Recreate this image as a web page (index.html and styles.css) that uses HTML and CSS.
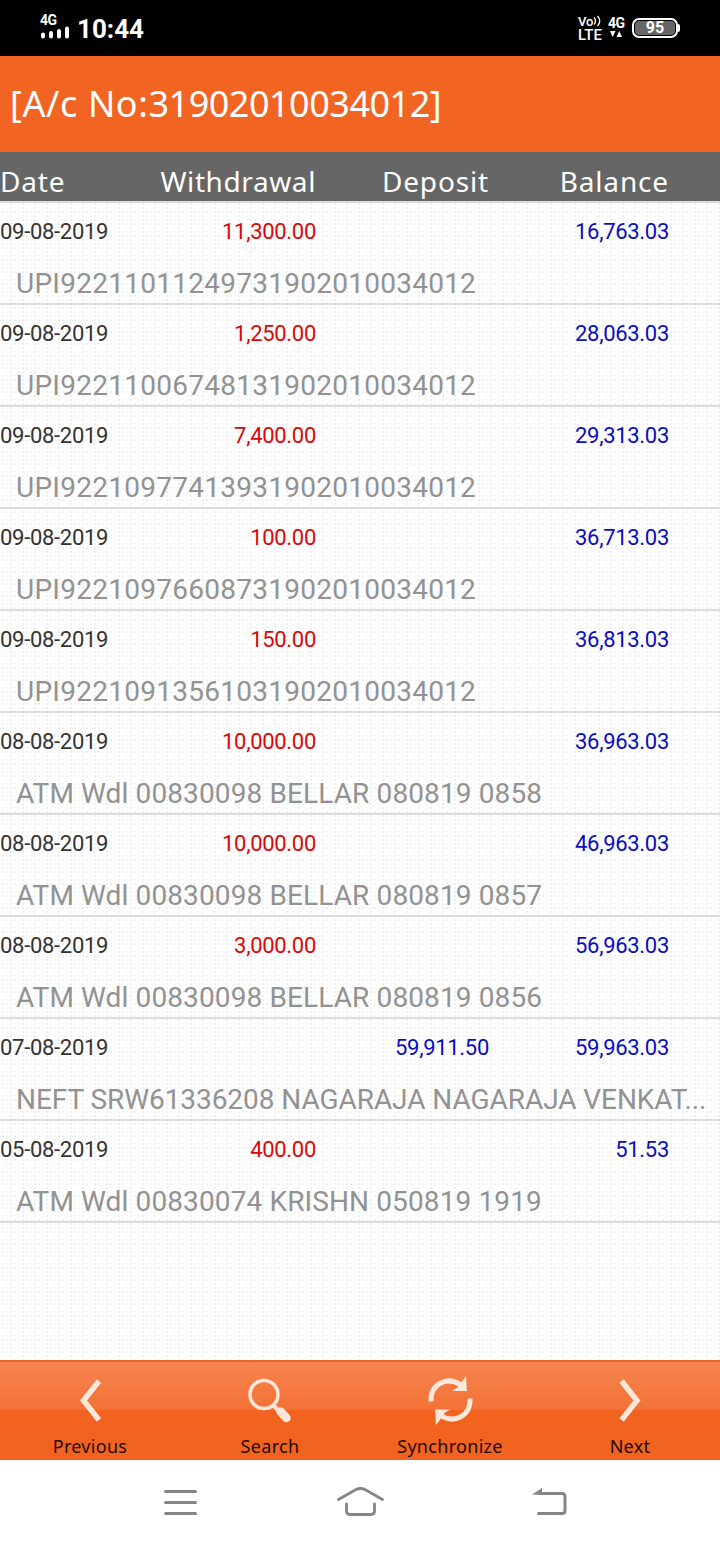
FILE: index.html
```html
<!DOCTYPE html>
<html lang="en">
<head>
  <meta charset="UTF-8">
  <meta name="viewport" content="width=device-width, initial-scale=1.0">
  <title>Account Statement</title>
  <link rel="stylesheet" href="styles.css">
</head>
<body>
  <div class="status">
    <div class="signal">
      <span class="net">4G</span>
      <svg width="30" height="13" viewBox="0 0 30 13" stroke="#fff" stroke-width="4" stroke-linecap="round"><path d="M3 8.500v2M11 7v3.500M19 5v5.500M27 2.500v8"/></svg>
    </div>
    <span class="clock">10:44</span>
    <div class="volte">
      <span class="vo">Vo<svg width="9" height="12" viewBox="0 0 9 12" fill="none" stroke="#fff" stroke-width="1.300"><path d="M1 2.500q3 3.500 0 7M4.500 1q4.500 5 0 10"/></svg></span>
      <span class="lte">LTE</span>
    </div>
    <div class="data">
      <span>4G</span>
      <svg width="12" height="6" viewBox="0 0 12 6" fill="#fff"><path d="M0 0h5.500L2.750 6zM6.500 6H12L9.250 0z"/></svg>
    </div>
    <div class="battery"><span>95</span></div>
    <i class="tip"></i>
  </div>

  <div class="title"><span class="label">[A/c No:</span><span class="number">31902010034012]</span></div>

  <div class="cols head">
    <span class="h-date">Date</span><span class="h-wdl">Withdrawal</span><span>Deposit</span><span>Balance</span>
  </div>

  <div class="list">
    <div class="row">
      <div class="cols"><span>09-08-2019</span><span class="red">11,300.00</span><span></span><span class="blue">16,763.03</span></div>
      <p class="upi">UPI92211011249731902010034012</p>
    </div>
    <div class="row">
      <div class="cols"><span>09-08-2019</span><span class="red">1,250.00</span><span></span><span class="blue">28,063.03</span></div>
      <p class="upi">UPI92211006748131902010034012</p>
    </div>
    <div class="row">
      <div class="cols"><span>09-08-2019</span><span class="red">7,400.00</span><span></span><span class="blue">29,313.03</span></div>
      <p class="upi">UPI92210977413931902010034012</p>
    </div>
    <div class="row">
      <div class="cols"><span>09-08-2019</span><span class="red">100.00</span><span></span><span class="blue">36,713.03</span></div>
      <p class="upi">UPI92210976608731902010034012</p>
    </div>
    <div class="row">
      <div class="cols"><span>09-08-2019</span><span class="red">150.00</span><span></span><span class="blue">36,813.03</span></div>
      <p class="upi">UPI92210913561031902010034012</p>
    </div>
    <div class="row">
      <div class="cols"><span>08-08-2019</span><span class="red">10,000.00</span><span></span><span class="blue">36,963.03</span></div>
      <p class="atm">ATM Wdl 00830098 BELLAR 080819 0858</p>
    </div>
    <div class="row">
      <div class="cols"><span>08-08-2019</span><span class="red">10,000.00</span><span></span><span class="blue">46,963.03</span></div>
      <p class="atm">ATM Wdl 00830098 BELLAR 080819 0857</p>
    </div>
    <div class="row">
      <div class="cols"><span>08-08-2019</span><span class="red">3,000.00</span><span></span><span class="blue">56,963.03</span></div>
      <p class="atm">ATM Wdl 00830098 BELLAR 080819 0856</p>
    </div>
    <div class="row">
      <div class="cols"><span>07-08-2019</span><span></span><span class="blue">59,911.50</span><span class="blue">59,963.03</span></div>
      <p class="neft">NEFT SRW61336208 NAGARAJA NAGARAJA VENKAT...</p>
    </div>
    <div class="row">
      <div class="cols"><span>05-08-2019</span><span class="red">400.00</span><span></span><span class="blue">51.53</span></div>
      <p class="atm">ATM Wdl 00830074 KRISHN 050819 1919</p>
    </div>
  </div>

  <div class="tabs">
    <div class="tab">
      <svg width="56" height="56" viewBox="0 0 56 56" fill="none" stroke="#fde6da" stroke-width="5.500"><path d="M37 9L21.500 28.500l15.500 19.500"/></svg>
      <span>Previous</span>
    </div>
    <div class="tab">
      <svg width="56" height="56" viewBox="0 0 56 56" fill="none" stroke="#fde6da"><circle cx="22" cy="22.500" r="14" stroke-width="3.500"/><path d="M31.500 33.500l5 5" stroke-width="4"/><path d="M38.500 39.500l6 6.500" stroke-width="8.500" stroke-linecap="round"/></svg>
      <span>Search</span>
    </div>
    <div class="tab">
      <svg width="56" height="56" viewBox="0 0 56 56"><path d="M9 29.500C8 12 25 4 38 12.500" fill="none" stroke="#fde6da" stroke-width="5"/><path d="M44 4l1 15H30l5.500-3.500 3.500-5z" fill="#fde6da"/><path d="M48 26.500C49 44 32 52 19 43.500" fill="none" stroke="#fde6da" stroke-width="5"/><path d="M14 53l-1-15.500h15l-5.500 3.500-3.500 5.500z" fill="#fde6da"/></svg>
      <span>Synchronize</span>
    </div>
    <div class="tab">
      <svg width="56" height="56" viewBox="0 0 56 56" fill="none" stroke="#fde6da" stroke-width="5.500"><path d="M19.500 9L35 28.500l-15.500 19.500"/></svg>
      <span>Next</span>
    </div>
  </div>

  <div class="nav">
    <svg width="36" height="36" viewBox="0 0 36 36" fill="none" stroke="#858585" stroke-width="3" stroke-linecap="round"><path d="M3.500 7.500h30M3.500 18.500h30M3.500 29.500h30"/></svg>
    <svg class="home" width="50" height="36" viewBox="0 0 50 36" fill="none" stroke="#858585" stroke-width="2.800" stroke-linecap="round"><path d="M3.500 15.500L21 5.500q4.500-2 9 0l17.500 10M11.500 20v7q0 3.500 3.500 3.500h21q3.500 0 3.500-3.500v-7"/></svg>
    <svg width="36" height="36" viewBox="0 0 36 36" fill="none" stroke="#858585" stroke-width="3" stroke-linecap="round"><path d="M8 9.500h23q3 0 3 3v14q0 3-3 3H7.500"/><path d="M1 10.500L11 4v7z" fill="#858585" stroke="none"/></svg>
  </div>
</body>
</html>
```
FILE: styles.css
```css
*{ box-sizing: border-box;}
body{ margin: 0; width: 720px; height: 1544px; overflow: hidden; display: flex; flex-direction: column; background: #fff; font-family: Roboto, "Liberation Sans", sans-serif;}
svg{ display: block; flex: none;}

/* status bar */
.status{ height: 56px; flex: none; padding-left: 40px; display: flex; align-items: flex-start; background: #000; color: #fff; font-weight: 500;}
.signal{ width: 30px; padding-top: 14px;}
.net{ display: block; font-size: 14px; line-height: 12px; font-weight: 700; letter-spacing: -0.5px;}
.clock{ width: 500px; padding-left: 7px; font-size: 26px; line-height: 30px; margin-top: 14px; font-weight: 700;}
.volte{ width: 38px; padding: 15px 0 0 8px;}
.vo{ display: flex; font-size: 13px; line-height: 13px;}
.lte{ display: block; line-height: 14px; font-size: 15px;}
.data{ width: 24px; font-size: 14px; font-weight: 700; letter-spacing: -0.5px; padding-top: 16px;}
.data span{ display: block; line-height: 15px;}
.data svg{ margin-left: 2px;}
.battery{ width: 46px; height: 20px; margin-top: 18px; padding: 1px; border: 2px solid #fff; border-radius: 7px;}
.battery span{ display: block; height: 14px; border-radius: 4px; background: #666; font-size: 16px; line-height: 14px; font-weight: 700; text-align: center;}
.tip{ width: 2px; height: 8px; margin-top: 24px; background: #fff; border-radius: 0 2px 2px 0;}

.title{ height: 96px; flex: none; padding-left: 10px; background: #f26422; color: #fff; font: 36px/96px "Noto Sans", sans-serif; white-space: nowrap;}
.label{ letter-spacing: 0.6px;}
.number{ letter-spacing: -0.5px;}

/* table */
.cols{ display: grid; grid-template-columns: 136px 180px 173px 180px; text-align: right;}
.cols span:first-child{ text-align: left;}
.head{ height: 51px; flex: none; padding-top: 9px; background: #666; border-bottom: 2px solid #dcdcdc; color: #fff; font: 28px/40px "Noto Sans", sans-serif; letter-spacing: 0.85px;}
.h-wdl{ letter-spacing: 0.6px;}
.list{ height: 1157px; flex: none;
  background:
    repeating-linear-gradient(to right, transparent 0 2px, #fff 2px 4px) 2px 0,
    repeating-linear-gradient(to bottom, transparent 0 2px, #fff 2px 4px),
    repeating-linear-gradient(to right, transparent 0 6px, #f8f8f8 6px 8px, transparent 8px 10px, #efefef 10px 12px),
    repeating-linear-gradient(to bottom, transparent 0 4px, #f8f8f8 4px 6px, transparent 6px 8px, #efefef 8px 10px, transparent 10px 12px), #fff;
}
.row{ height: 102px; border-bottom: 2px solid #dcdcdc;}
.row .cols{ height: 58px; font-size: 22px; line-height: 57px; letter-spacing: -0.3px; color: #333;}
.row .red{ color: #d80808;}
.row .blue{ color: #0c0cc0;}
.row p{ margin: 0; padding-left: 16px; font-size: 28px; line-height: 45px; color: #929292; white-space: nowrap;}
.row .upi{ letter-spacing: 0.26px;}
.row .atm{ letter-spacing: 0.12px;}
.row .neft{ letter-spacing: -0.06px;}

/* bottom toolbar */
.tabs{ height: 100px; flex: none; display: grid; grid-template-columns: repeat(4, 180px); border-top: 2px solid #ee6427; background: linear-gradient(#f68551, #f37135 48px, #f26320 48px);}
.tab{ display: flex; flex-direction: column; align-items: center; padding-top: 10px; color: #1c0804; font: 18px/36px "Noto Sans", sans-serif; letter-spacing: 0.3px;}

.nav{ height: 84px; flex: none; display: flex; justify-content: space-between; align-items: flex-start; padding: 24px 153px 0 162px;}
.home{ margin-right: 10px;}
```
